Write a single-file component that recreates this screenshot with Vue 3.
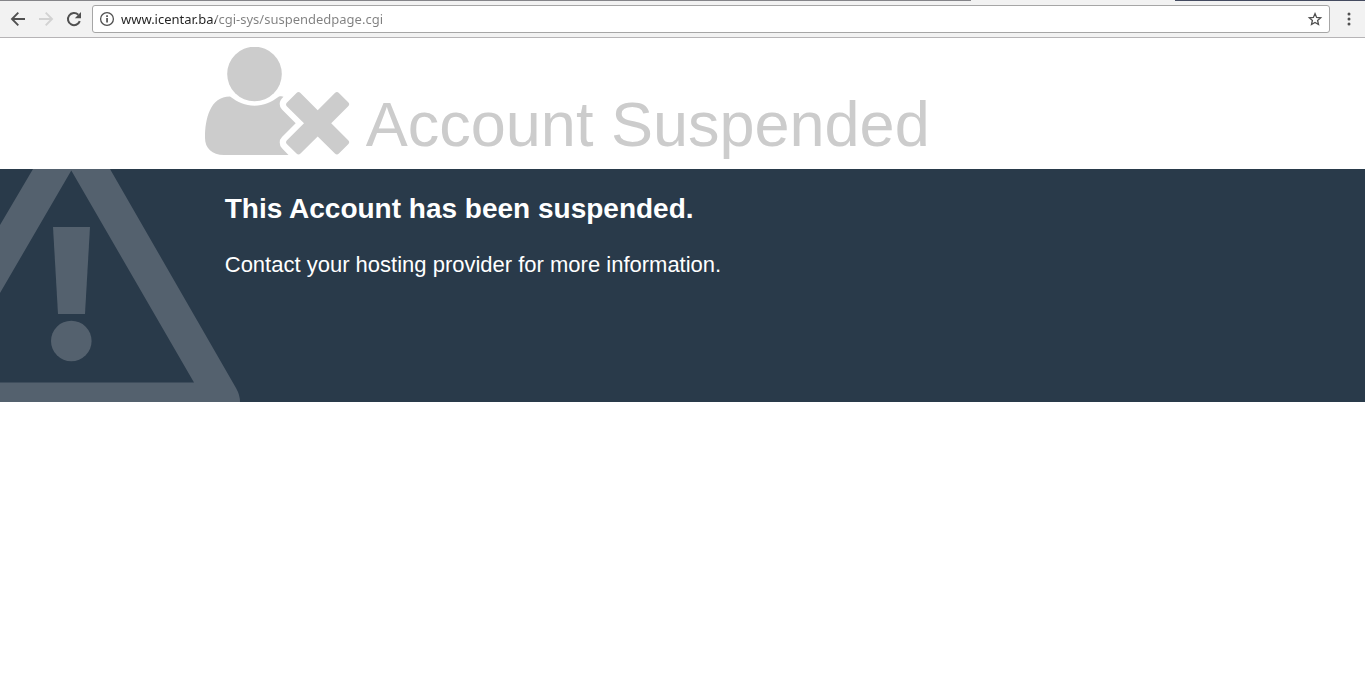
<script setup>
import { ref } from 'vue'

const address = ref('www.icentar.ba/cgi-sys/suspendedpage.cgi')
</script>

<template>
  <div class="browser">
    <div class="tab-edge"><span class="edge-inactive"></span><span class="edge-active"></span><span class="edge-frame"></span></div>
    <nav class="toolbar" aria-label="Browser toolbar">
      <button class="tool" type="button" aria-label="Back">
        <svg viewBox="0 0 16 16"><path d="M15 8H2.500M8.300 1.700 2 8l6.300 6.300" fill="none" stroke="#505050" stroke-width="1.900" /></svg>
      </button>
      <button class="tool" type="button" aria-label="Forward" disabled>
        <svg viewBox="0 0 16 16"><path d="M1 8h12.500M7.700 1.700 14 8l-6.300 6.300" fill="none" stroke="#d2d2d2" stroke-width="1.900" /></svg>
      </button>
      <button class="tool" type="button" aria-label="Reload">
        <svg viewBox="0 0 16 16">
          <path d="M13.800 10.200A6.100 6.100 0 1 1 12.300 3.700" fill="none" stroke="#505050" stroke-width="2" />
          <path d="M15 1v6.200H8.800z" fill="#505050" />
        </svg>
      </button>
      <div class="address">
        <button class="site-info" type="button" aria-label="Site information">
          <svg viewBox="0 0 16 16">
            <circle cx="8" cy="8" r="6.400" fill="none" stroke="#505050" stroke-width="1.300" />
            <path d="M7.200 7h1.700v4.600H7.200zM7.200 4.300h1.700v1.600H7.200z" fill="#505050" />
          </svg>
        </button>
        <input v-model="address" class="url" type="text" aria-label="Address" spellcheck="false" />
        <button class="star" type="button" aria-label="Bookmark this page">
          <svg viewBox="0 0 16 16">
            <path d="m8 2.600 1.600 3.800 4.100.4-3.100 2.700.9 4L8 11.400l-3.500 2.100.9-4-3.100-2.700 4.100-.4z" fill="none" stroke="#505050" stroke-width="1.300" />
          </svg>
        </button>
      </div>
      <button class="menu" type="button" aria-label="Menu">
        <svg viewBox="0 0 16 16">
          <g fill="#505050"><circle cx="8" cy="3" r="1.500" /><circle cx="8" cy="8" r="1.500" /><circle cx="8" cy="13" r="1.500" /></g>
        </svg>
      </button>
    </nav>

    <header class="heading">
      <svg class="user-icon" viewBox="0 0 145 109" aria-hidden="true">
        <g fill="#ccc">
          <circle cx="49.500" cy="27" r="27.300" />
          <path d="M25 49.500C33 55.500 40 58.700 49.500 58.700S66 55.500 74 49.500C76 49 77.500 49.200 78.500 49.700Q74.700 53 74.700 57 74.700 60.300 77 62.600L90.700 76.300 77 90Q74.700 92.300 74.700 95.500 74.700 98.800 77 101.200L83.500 108H19C7 108 0 101 0 91 0 72 5 49.500 25 49.500z" />
          <path d="M82 55.500 91.500 46Q93.500 44 95.500 46L112.700 63.200 129.900 46Q131.900 44 133.900 46L143.200 55.300Q145.200 57.300 143.200 59.300L126.200 76.300 143.200 93.300Q145.200 95.300 143.200 97.300L133.900 106.600Q131.900 108.600 129.900 106.600L112.700 89.400 95.500 106.600Q93.500 108.600 91.500 106.600L82 97.200Q80 95.200 82 93.200L99 76.300 82 59.400Q80 57.400 82 55.500z" />
        </g>
      </svg>
      <h1>Account Suspended</h1>
    </header>

    <main class="notice">
      <svg class="warning" viewBox="0 0 240 233" aria-hidden="true">
        <path fill="#54616e" d="M33 0h77L236 219Q240 226 240 233H0v-19.500h194L71.300 1.500 0 124V56z" />
        <path fill="#54616e" d="M53 58h37l-5 87H58z" />
        <circle cx="71.300" cy="172" r="20.300" fill="#54616e" />
      </svg>
      <section class="message">
        <h2>This Account has been suspended.</h2>
        <p>Contact your hosting provider for more information.</p>
      </section>
    </main>
  </div>
</template>

<style>
body {
  background: #fff;
}
</style>

<style scoped>
.browser {
  position: relative;
  font-family: "Liberation Sans", Arial, sans-serif;
}
.tab-edge {
  position: absolute;
  top: 0;
  left: 0;
  right: 0;
  height: 1px;
  display: flex;
}
.edge-inactive { flex: 971; background: #858589; }
.edge-active { flex: 204; background: #f2f2f2; }
.edge-frame { flex: 190; background: #444b60; }
.toolbar {
  display: flex;
  align-items: center;
  height: 38px;
  box-sizing: border-box;
  padding: 0 8px;
  background: #f2f2f2;
  border-bottom: 1px solid #b6b4b6;
}
button {
  display: flex;
  align-items: center;
  justify-content: center;
  padding: 0;
  border: 0;
  background: none;
  flex: none;
}
button svg {
  width: 16px;
  height: 16px;
}
.tool {
  width: 20px;
  height: 28px;
  margin-right: 8px;
}
.address {
  flex: 1;
  display: flex;
  align-items: center;
  height: 28px;
  box-sizing: border-box;
  padding: 0 6px;
  background: #fff;
  border: 1px solid #a6a6a6;
  border-radius: 3px;
}
.url {
  flex: 1;
  min-width: 0;
  height: 20px;
  margin: 0 6px;
  padding: 0;
  border: 0;
  outline: 0;
  font-family: "Noto Sans", "Open Sans", sans-serif;
  font-size: 13px;
  line-height: 20px;
  color: transparent;
  background: linear-gradient(to right, #222 95px, #808080 95px);
  -webkit-background-clip: text;
  background-clip: text;
}
.menu {
  width: 16px;
  height: 28px;
  margin-left: 11px;
}
.heading {
  display: flex;
  align-items: flex-start;
  height: 131px;
  box-sizing: border-box;
  padding: 9px 15% 0;
  color: #ccc;
}
.user-icon {
  flex: none;
  width: 145px;
  height: 109px;
}
h1 {
  margin: 41px 0 0 16px;
  font-size: 63px;
  line-height: 72px;
  font-weight: 400;
  white-space: nowrap;
}
.notice {
  position: relative;
  min-height: 233px;
  background: #293a4a;
  color: #fff;
}
.warning {
  position: absolute;
  left: 0;
  top: 0;
  width: 240px;
  height: 233px;
}
.message {
  position: relative;
  padding: 23px 15% 0;
}
h2 {
  margin: 0 0 0 20px;
  font-size: 28px;
  line-height: 34px;
}
p {
  margin: 26px 0 0 20px;
  font-size: 22px;
  line-height: 26px;
}
</style>
